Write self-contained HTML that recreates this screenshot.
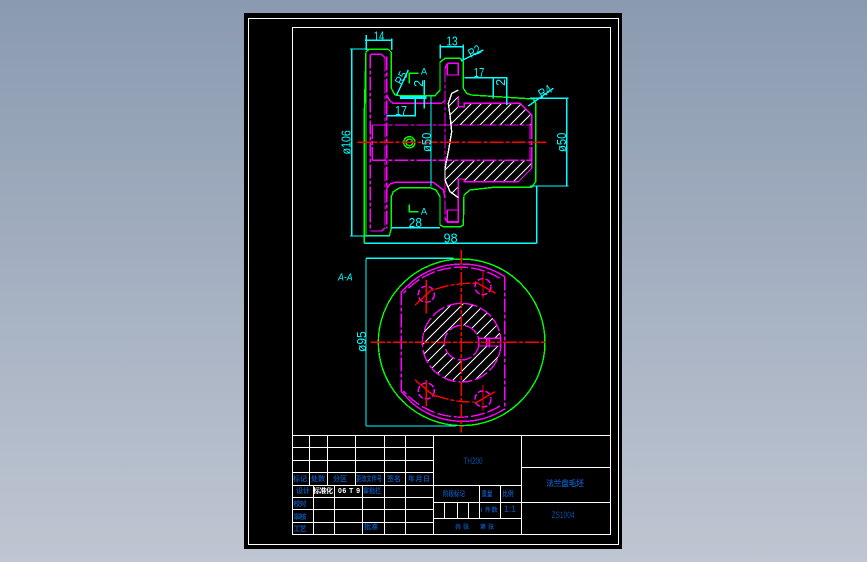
<!DOCTYPE html>
<html><head><meta charset="utf-8"><style>
html,body{margin:0;padding:0;width:867px;height:562px;overflow:hidden;background:linear-gradient(180deg,#8a9ab0 0%,#bfc6d2 100%)}
svg{position:absolute;left:0;top:0;display:block}
.n *{vector-effect:non-scaling-stroke;fill:none;stroke-width:1.4}
.n text{stroke:none}
.n .c{fill:#00ffff;font-size:38px;text-anchor:middle;font-family:"Liberation Sans",sans-serif}
.b{fill:#0b50aa;font-size:7px;text-anchor:middle;font-weight:bold;font-family:"Liberation Sans","Noto Sans CJK SC",sans-serif}
.w{fill:#fff;font-size:7px;text-anchor:middle;font-weight:bold;font-family:"Liberation Sans","Noto Sans CJK SC",sans-serif}
</style></head><body>
<svg width="867" height="562" viewBox="0 0 867 562" shape-rendering="crispEdges">
<defs>
<pattern id="h1" patternUnits="userSpaceOnUse" width="30" height="30"><path d="M-2,32L32,-2M-2,2L2,-2M28,32L32,28" stroke="#fff" stroke-width="3" fill="none"/></pattern>
<pattern id="h2" patternUnits="userSpaceOnUse" width="33" height="33"><path d="M-2,35L35,-2M-2,2L2,-2M31,35L35,31" stroke="#fff" stroke-width="3" fill="none"/></pattern>
</defs>
<rect x="244" y="13" width="378" height="536" fill="#000"/>
<g fill="none" stroke="#fff" stroke-width="1">
<rect x="248.5" y="18.5" width="370" height="526"/>
<rect x="292.5" y="27.5" width="318" height="507"/>
<path d="M292.5,435.5H610.5M292.5,447.5H433.5M292.5,460.5H433.5M292.5,472.5H433.5M292.5,485.5H521.5M292.5,497.5H433.5M292.5,509.5H433.5M292.5,522.5H433.5"/>
<path d="M309.5,435.5V485.5M327.5,435.5V485.5M355.5,435.5V485.5M384.5,435.5V534.5M405.5,435.5V534.5M433.5,435.5V534.5M521.5,435.5V534.5"/>
<path d="M313.5,485.5V534.5M334.5,485.5V534.5M362.5,485.5V534.5"/>
<path d="M521.5,467.5H610.5M521.5,502.5H610.5M433.5,502.5H521.5M433.5,518.5H521.5M479.5,485.5V518.5M500.5,485.5V518.5M444.5,502.5V518.5M457.5,502.5V518.5M468.5,502.5V518.5"/>
</g>

<!-- top view -->
<g class="n" transform="translate(330,25) scale(.33333)">
<path d="M360,300H605V270L570,235H403V245H385V195L365,205L355,235L362,270Z" style="fill:url(#h1)"/>
<path d="M345,406H605V430L565,470H403V462H385V518L360,500L345,465Z" style="fill:url(#h1)"/>
<path stroke="#00ff00" d="M108,632V80L118,73H175L184,82V190L195,210L210,212H315L330,195V112L345,100H390L400,110V190L410,205L425,210L610,222L617,235V470L605,487H490L420,495L402,510L400,600L392,605H340L330,600V515L318,495L300,488H210L190,500L184,515V610L178,632Z"/>
<path stroke="#00ff00" d="M108,80L103,260V655M238,175V145H265M238,538V560H265"/>
<circle cx="238" cy="352" r="17" stroke="#00ff00"/><circle cx="238" cy="352" r="10" stroke="#00ff00"/>
<path stroke="#ff00ff" d="M121,88H155L165,98M121,618H155L165,608"/>
<path stroke="#ff00ff" stroke-dasharray="14 2 4 2" d="M121,88V618M165,98V608M170,95V610"/>
<path stroke="#ff00ff" d="M170,210L180,228L190,235H335L345,225M352,115H385V150H352V115M385,215V245H403V235H570L605,270V300M605,405V430L565,470H403V462H385V555H352V590H385V555M170,490L180,477L195,472H310L340,495L345,520M345,580L352,592H385M345,130L352,115"/>
<path stroke="#ff00ff" stroke-dasharray="14 2 4 2" d="M127,300H605M127,406H605M127,300V406M600,300V406M605,300V406M345,130V580"/>
<path stroke="#fff" d="M385,195L365,205L355,235L360,270L365,320L355,380L345,430V465L360,500L385,518"/>
<path stroke="#ff0000" stroke-dasharray="14 2 4 2" d="M82,352H650"/>
<path stroke="#00ffff" d="M109,30V75M185,40V75M105,46H185M331,58V100M400,58V105M331,65H400M393,108L460,75M65,72V633M60,72H115M60,633H180M103,655H620M620,485V655M403,158H490M490,158V220M490,158H532M530,158V240M595,243L670,190M710,220V483M600,220H715M600,483H715M303,215V485M170,272H256M256,220V275M283,165V250M210,215H290M210,220H290M185,608H330M200,210L235,135"/>
<text class="c" x="147" y="47" textLength="32" lengthAdjust="spacingAndGlyphs">14</text>
<text class="c" x="366" y="62" textLength="34" lengthAdjust="spacingAndGlyphs">13</text>
<text class="c" x="447" y="156" textLength="32" lengthAdjust="spacingAndGlyphs">17</text>
<text class="c" x="213" y="270" textLength="36" lengthAdjust="spacingAndGlyphs">17</text>
<text class="c" x="256" y="606" textLength="40" lengthAdjust="spacingAndGlyphs">28</text>
<text class="c" x="362" y="652" textLength="42" lengthAdjust="spacingAndGlyphs">98</text>
<text class="c" transform="translate(62,352) rotate(-90)" textLength="72" lengthAdjust="spacingAndGlyphs">ø106</text>
<text class="c" transform="translate(303,352) rotate(-90)" textLength="58" lengthAdjust="spacingAndGlyphs">ø50</text>
<text class="c" transform="translate(708,352) rotate(-90)" textLength="58" lengthAdjust="spacingAndGlyphs">ø50</text>
<text class="c" transform="translate(279,175) rotate(-90)">2</text>
<text class="c" transform="translate(525,172) rotate(-90)">2</text>
<text class="c" transform="translate(440,90) rotate(-30)" textLength="38" lengthAdjust="spacingAndGlyphs">R2</text>
<text class="c" transform="translate(652,210) rotate(-32)" textLength="40" lengthAdjust="spacingAndGlyphs">R4</text>
<text class="c" transform="translate(225,165) rotate(-62)" textLength="38" lengthAdjust="spacingAndGlyphs">R5</text>
<text class="c" style="font-size:28px" x="282" y="149">A</text>
<text class="c" style="font-size:28px" x="282" y="569">A</text>
</g>

<!-- section view -->
<g class="n" transform="translate(330,250) scale(.33333)">
<path fill-rule="evenodd" style="fill:url(#h2)" d="M277,278A118,118 0 1,1 513,278A118,118 0 1,1 277,278ZM343,278A52,52 0 1,0 447,278A52,52 0 1,0 343,278Z"/>
<rect x="447" y="265" width="68" height="25" style="fill:#000"/>
<circle cx="395" cy="277" r="250" stroke="#00ff00"/>
<path stroke="#ff00ff" stroke-dasharray="14 2 4 2" d="M214,125V425M524,80V477"/>
<path stroke="#ff00ff" d="M214,425L250,462A235,235 0 0,0 524,477M524,80A237,237 0 0,0 250,92L214,125"/>
<path stroke="#ff00ff" stroke-dasharray="14 3" d="M510,85A226,226 0 0,0 235,115L220,130M510,468A226,226 0 0,1 235,438L220,423"/>
<circle cx="395" cy="278" r="118" stroke="#ff00ff" stroke-dasharray="14 3"/>
<circle cx="395" cy="278" r="52" stroke="#ff00ff" stroke-dasharray="14 3"/>
<path stroke="#ff00ff" d="M447,265H515M447,288H515M478,264V292M470,265V288"/>
<g stroke="#ff00ff" stroke-dasharray="6 2"><circle cx="289" cy="133" r="24"/><circle cx="459" cy="110" r="24"/><circle cx="289" cy="423" r="24"/><circle cx="459" cy="447" r="24"/></g>
<path stroke="#ff0000" stroke-dasharray="14 2 4 2" d="M123,277H650M394,0V548M315,118Q375,98 435,100M315,436Q375,458 435,456"/>
<path stroke="#ff0000" d="M289,90V190M459,66V145M289,390V470M459,405V482M255,165L310,115M435,95L497,130M255,390L315,440M435,460L495,425"/>
<path stroke="#00ffff" d="M108,25V528M108,25H370M108,528H378"/>
<text class="c" transform="translate(108,275) rotate(-90)" textLength="62" lengthAdjust="spacingAndGlyphs">ø95</text>
<text class="c" style="font-size:30px;font-style:italic" x="46" y="92" textLength="44" lengthAdjust="spacingAndGlyphs">A-A</text>
</g>

<g shape-rendering="auto">
<text class="b" x="300" y="481" textLength="14">标记</text>
<text class="b" x="318" y="481" textLength="14">处数</text>
<text class="b" x="340" y="481" textLength="14">分区</text>
<text class="b" x="369" y="481" textLength="26" lengthAdjust="spacingAndGlyphs">更改文件号</text>
<text class="b" x="394" y="481" textLength="14">签名</text>
<text class="b" x="419" y="481" textLength="22">年月日</text>
<text class="b" x="303" y="493" textLength="14">设计</text>
<text class="w" x="323" y="493" textLength="20">标准化</text>
<text class="w" x="349" y="493" textLength="22">06 T 9</text>
<text class="b" x="372" y="493" textLength="18" lengthAdjust="spacingAndGlyphs">审批栏</text>
<text class="b" x="300" y="506" textLength="13">校对</text>
<text class="b" x="300" y="519" textLength="13">审核</text>
<text class="b" x="300" y="531" textLength="13">工艺</text>
<text class="b" x="371" y="529" textLength="14">批准</text>
<text class="b" x="473" y="464" textLength="19" lengthAdjust="spacingAndGlyphs" style="font-size:9px;font-weight:normal">TH200</text>
<text class="b" x="565" y="486" textLength="38" style="font-size:8px">法兰盘毛坯</text>
<text class="b" x="563" y="518" textLength="23" lengthAdjust="spacingAndGlyphs" style="font-size:9px;font-weight:normal">ZS1004</text>
<text class="b" x="454" y="496" textLength="22" lengthAdjust="spacingAndGlyphs">阶段标记</text>
<text class="b" x="487" y="496" textLength="11" lengthAdjust="spacingAndGlyphs">重量</text>
<text class="b" x="508" y="496" textLength="11" lengthAdjust="spacingAndGlyphs">比例</text>
<text class="b" x="510" y="512" textLength="12" style="font-size:9px;font-weight:normal">1:1</text>
<text class="b" x="489" y="512" textLength="17" style="font-size:6px">l 件数</text>
<text class="b" x="462" y="529" textLength="14" style="font-size:6px">共 张</text>
<text class="b" x="487" y="529" textLength="14" style="font-size:6px">第 张</text>
</g>
</svg>
</body></html>
